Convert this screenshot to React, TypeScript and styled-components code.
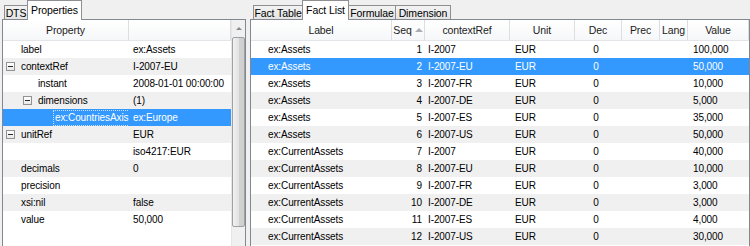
import React from "react";
import styled, { createGlobalStyle, css } from "styled-components";

const GlobalStyle = createGlobalStyle`
  html, body { margin: 0; padding: 0; }
  body {
    background: #f0f0f0;
    font-family: "Liberation Sans", Arial, sans-serif;
    font-size: 10px;
    color: #000;
  }
`;

const Window = styled.div`
  display: flex;
  height: 246px;
  width: 750px;
  overflow: hidden;
  background: #f0f0f0;
`;

const Pane = styled.div<{ $width: number; $ml: number }>`
  display: flex;
  flex-direction: column;
  width: ${(p) => p.$width}px;
  margin-left: ${(p) => p.$ml}px;
  flex: none;
`;

const TabBar = styled.div<{ $pl: number }>`
  display: flex;
  align-items: flex-end;
  height: 19px;
  padding-left: ${(p) => p.$pl}px;
  position: relative;
  z-index: 2;
`;

const Tab = styled.div<{ $active?: boolean; $w: number }>`
  box-sizing: border-box;
  width: ${(p) => p.$w}px;
  border: 1px solid #8d8f93;
  border-bottom: none;
  display: flex;
  align-items: center;
  justify-content: center;
  font-size: 10.5px;
  letter-spacing: -0.1px;
  white-space: nowrap;
  ${(p) =>
    p.$active
      ? css`
          height: 20px;
          margin-bottom: -1px;
          background: #fff;
          padding-bottom: 2px;
          position: relative;
          z-index: 3;
        `
      : css`
          height: 14px;
          background: linear-gradient(#f3f3f3, #e4e4e4);
          padding-top: 1px;
        `}
  & + & {
    margin-left: -1px;
  }
`;

const Panel = styled.div`
  flex: 1;
  box-sizing: border-box;
  border: 1px solid #828790;
  border-bottom: none;
  background: #fff;
  display: flex;
  min-height: 0;
`;

const TreeArea = styled.div`
  flex: 1;
  display: flex;
  flex-direction: column;
`;

const HeaderRow = styled.div<{ $cols: string }>`
  display: grid;
  grid-template-columns: ${(p) => p.$cols};
  height: 21px;
  background: linear-gradient(#ffffff, #f6f7f9);
  border-bottom: 1px solid #e3e5e8;
  box-sizing: border-box;
`;

const HeaderCell = styled.div`
  display: flex;
  align-items: center;
  justify-content: center;
  gap: 3px;
  border-right: 1px solid #dcdee2;
  font-size: 10.5px;
  letter-spacing: -0.1px;
  color: #1b1b1b;
  white-space: nowrap;
  overflow: hidden;
`;

const SortArrow = styled.span`
  width: 0;
  height: 0;
  border-left: 4px solid transparent;
  border-right: 4px solid transparent;
  border-bottom: 4px solid #a9adb3;
  margin-top: -1px;
`;

const Row = styled.div<{ $cols: string; $alt?: boolean; $sel?: boolean }>`
  display: grid;
  grid-template-columns: ${(p) => p.$cols};
  height: 17px;
  line-height: 17px;
  font-size: 10px;
  letter-spacing: -0.1px;
  background: ${(p) => (p.$sel ? "#3399ff" : p.$alt ? "#f0f0f0" : "#ffffff")};
  color: ${(p) => (p.$sel ? "#ffffff" : "#000000")};
`;

const Cell = styled.div<{ $align?: "left" | "right" | "center"; $pl?: number; $pr?: number }>`
  display: flex;
  align-items: center;
  justify-content: ${(p) =>
    p.$align === "right" ? "flex-end" : p.$align === "center" ? "center" : "flex-start"};
  padding-left: ${(p) => p.$pl ?? 0}px;
  padding-right: ${(p) => p.$pr ?? 0}px;
  white-space: nowrap;
  overflow: hidden;
`;

const Expander = styled.span<{ $hidden?: boolean }>`
  box-sizing: border-box;
  width: 9px;
  height: 9px;
  flex: none;
  margin-right: 5px;
  border: 1px solid ${(p) => (p.$hidden ? "transparent" : "#929292")};
  background: ${(p) => (p.$hidden ? "transparent" : "linear-gradient(#ffffff, #e8e8e8)")};
  position: relative;
  &::after {
    content: "";
    display: ${(p) => (p.$hidden ? "none" : "block")};
    position: absolute;
    left: 1px;
    right: 1px;
    top: 3px;
    height: 1px;
    background: #2a2a2a;
  }
`;

const FocusText = styled.span<{ $focus?: boolean }>`
  padding: 0 1px;
  line-height: 14px;
  outline: ${(p) => (p.$focus ? "1px dotted #c8e0ff" : "none")};
`;

const Scrollbar = styled.div`
  width: 14px;
  flex: none;
  display: flex;
  flex-direction: column;
  background: #f0f0f0;
  border-left: 1px solid #e6e6e6;
  box-sizing: border-box;
`;

const ScrollButton = styled.div`
  height: 16px;
  display: flex;
  align-items: center;
  justify-content: center;
  &::before {
    content: "";
    width: 0;
    height: 0;
    border-left: 3px solid transparent;
    border-right: 3px solid transparent;
    border-bottom: 3px solid #8a8a8a;
  }
`;

const Thumb = styled.div`
  margin: 1px 0 0 0;
  height: 190px;
  box-sizing: border-box;
  border: 1px solid #9da1a6;
  border-radius: 2px;
  background: linear-gradient(to right, #f2f2f2, #e2e2e2 50%, #d2d2d2 51%, #cfcfcf);
`;

const Table = styled.div`
  flex: 1;
  display: flex;
  flex-direction: column;
`;

type Prop = { name: string; value: string; level: number; exp?: boolean; sel?: boolean };

const props: Prop[] = [
  { name: "label", value: "ex:Assets", level: 0 },
  { name: "contextRef", value: "I-2007-EU", level: 0, exp: true },
  { name: "instant", value: "2008-01-01 00:00:00", level: 1 },
  { name: "dimensions", value: "(1)", level: 1, exp: true },
  { name: "ex:CountriesAxis", value: "ex:Europe", level: 2, sel: true },
  { name: "unitRef", value: "EUR", level: 0, exp: true },
  { name: "", value: "iso4217:EUR", level: 1 },
  { name: "decimals", value: "0", level: 0 },
  { name: "precision", value: "", level: 0 },
  { name: "xsi:nil", value: "false", level: 0 },
  { name: "value", value: "50,000", level: 0 },
];

const facts = [
  ["ex:Assets", "I-2007", "100,000"],
  ["ex:Assets", "I-2007-EU", "50,000"],
  ["ex:Assets", "I-2007-FR", "10,000"],
  ["ex:Assets", "I-2007-DE", "5,000"],
  ["ex:Assets", "I-2007-ES", "35,000"],
  ["ex:Assets", "I-2007-US", "50,000"],
  ["ex:CurrentAssets", "I-2007", "40,000"],
  ["ex:CurrentAssets", "I-2007-EU", "10,000"],
  ["ex:CurrentAssets", "I-2007-FR", "3,000"],
  ["ex:CurrentAssets", "I-2007-DE", "3,000"],
  ["ex:CurrentAssets", "I-2007-ES", "4,000"],
  ["ex:CurrentAssets", "I-2007-US", "30,000"],
];

const TREE_COLS = "126px 102px";
const FACT_COLS = "141px 33px 85px 65px 47px 38px 28px 61px";

export default function App() {
  return (
    <>
      <GlobalStyle />
      <Window>
        <Pane $width={244} $ml={2}>
          <TabBar $pl={2}>
            <Tab $w={24}>DTS</Tab>
            <Tab $w={55} $active>
              Properties
            </Tab>
          </TabBar>
          <Panel>
            <TreeArea>
              <HeaderRow $cols={TREE_COLS}>
                <HeaderCell>Property</HeaderCell>
                <HeaderCell />
              </HeaderRow>
              {props.map((p, i) => (
                <Row key={i} $cols={TREE_COLS} $alt={i % 2 === 1} $sel={p.sel}>
                  <Cell $pl={3 + 17 * p.level}>
                    <Expander $hidden={!p.exp} />
                    <FocusText $focus={p.sel}>{p.name}</FocusText>
                  </Cell>
                  <Cell $pl={4}>{p.value}</Cell>
                </Row>
              ))}
            </TreeArea>
            <Scrollbar>
              <ScrollButton />
              <Thumb />
            </Scrollbar>
          </Panel>
        </Pane>
        <Pane $width={500} $ml={4}>
          <TabBar $pl={3}>
            <Tab $w={50}>Fact Table</Tab>
            <Tab $w={47} $active>
              Fact List
            </Tab>
            <Tab $w={48}>Formulae</Tab>
            <Tab $w={56}>Dimension</Tab>
          </TabBar>
          <Panel>
            <Table>
              <HeaderRow $cols={FACT_COLS}>
                <HeaderCell>Label</HeaderCell>
                <HeaderCell>
                  Seq
                  <SortArrow />
                </HeaderCell>
                <HeaderCell>contextRef</HeaderCell>
                <HeaderCell>Unit</HeaderCell>
                <HeaderCell>Dec</HeaderCell>
                <HeaderCell>Prec</HeaderCell>
                <HeaderCell>Lang</HeaderCell>
                <HeaderCell>Value</HeaderCell>
              </HeaderRow>
              {facts.map((f, i) => (
                <Row key={i} $cols={FACT_COLS} $alt={i % 2 === 1} $sel={i === 1}>
                  <Cell $pl={17}>{f[0]}</Cell>
                  <Cell $align="right" $pr={3}>
                    {i + 1}
                  </Cell>
                  <Cell $pl={3}>{f[1]}</Cell>
                  <Cell $pl={5}>EUR</Cell>
                  <Cell $align="center" $pr={5}>
                    0
                  </Cell>
                  <Cell />
                  <Cell />
                  <Cell $pl={5}>{f[2]}</Cell>
                </Row>
              ))}
            </Table>
          </Panel>
        </Pane>
      </Window>
    </>
  );
}
